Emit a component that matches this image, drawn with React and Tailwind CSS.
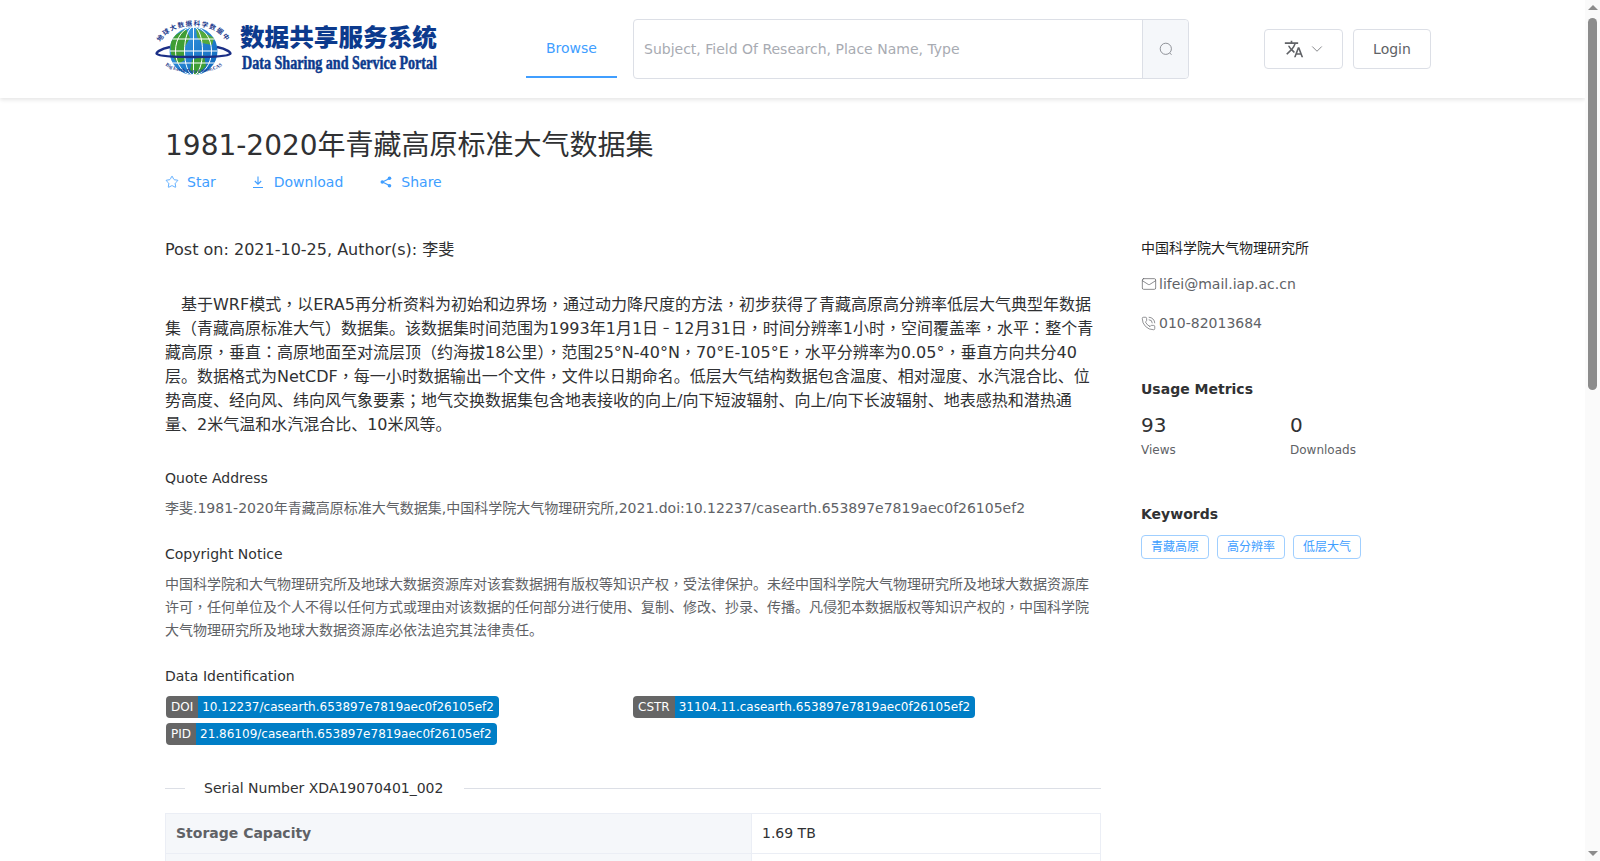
import { Mail, PhoneCall, Star, ChevronDown } from "lucide-react";
import { MdTranslate } from "react-icons/md";

const FONT = "font-['DejaVu_Sans','Noto_Sans_CJK_SC',sans-serif]";

const ABSTRACT =
  "　基于WRF模式，以ERA5再分析资料为初始和边界场，通过动力降尺度的方法，初步获得了青藏高原高分辨率低层大气典型年数据集（青藏高原标准大气）数据集。该数据集时间范围为1993年1月1日－12月31日，时间分辨率1小时，空间覆盖率，水平：整个青藏高原，垂直：高原地面至对流层顶（约海拔18公里），范围25°N-40°N，70°E-105°E，水平分辨率为0.05°，垂直方向共分40层。数据格式为NetCDF，每一小时数据输出一个文件，文件以日期命名。低层大气结构数据包含温度、相对湿度、水汽混合比、位势高度、经向风、纬向风气象要素；地气交换数据集包含地表接收的向上/向下短波辐射、向上/向下长波辐射、地表感热和潜热通量、2米气温和水汽混合比、10米风等。";

const COPYRIGHT =
  "中国科学院和大气物理研究所及地球大数据资源库对该套数据拥有版权等知识产权，受法律保护。未经中国科学院大气物理研究所及地球大数据资源库许可，任何单位及个人不得以任何方式或理由对该数据的任何部分进行使用、复制、修改、抄录、传播。凡侵犯本数据版权等知识产权的，中国科学院大气物理研究所及地球大数据资源库必依法追究其法律责任。";

const KEYWORDS = ["青藏高原", "高分辨率", "低层大气"];

// commas and colons sit centred in the reference, as in the TC cut of the font
function CjkText({ text }) {
  return text.split(/([，：；－])/).map((part, i) => {
    if (i % 2 === 0) return part;
    if (part === "－") {
      return (
        <span key={i} className="inline-block scale-x-[0.45] leading-none">
          {part}
        </span>
      );
    }
    return (
      <span key={i} className="font-['Noto_Sans_CJK_TC',sans-serif] leading-none">
        {part}
      </span>
    );
  });
}

function Logo() {
  return (
    <svg width="286" height="66" viewBox="0 0 286 66" className="shrink-0">
      <defs>
        <linearGradient id="sea" x1="0" y1="0" x2="1" y2="1">
          <stop offset="0" stopColor="#3fa0e8" />
          <stop offset="1" stopColor="#0a63b8" />
        </linearGradient>
        <clipPath id="ball">
          <circle cx="38.5" cy="36" r="24" />
        </clipPath>
        <path id="arcTop" d="M5 29 A34 22 0 0 1 72 29" />
        <path id="arcBottom" d="M9 49 A33 15 0 0 0 69 49" />
      </defs>
      <circle cx="38.5" cy="36" r="24" fill="url(#sea)" />
      <g clipPath="url(#ball)">
        <path d="M15 23 L31 14 L35 23 L29 33 L30 45 L23 49 L16 39 Z" fill="#3f9e35" />
        <path d="M41 13 L59 23 L57 30 L47 28 L42 22 Z" fill="#55a93c" />
        <path d="M37 45 L49 40 L51 51 L41 61 L35 55 Z" fill="#3f9e35" />
        <g fill="none" stroke="#fff" strokeWidth="1">
          <ellipse cx="38.5" cy="36" rx="9" ry="24" />
          <ellipse cx="38.5" cy="36" rx="18" ry="24" />
          <path d="M38.5 12V60M14 36H63M17 24H60M17 48H60" />
        </g>
      </g>
      <path d="M15 32 C5 34 0 38 2 39 C6 43 71 43 75 39 C77 38 72 34 62 32" fill="none" stroke="#1b2f86" strokeWidth="2.4" />
      <text fontSize="6.5" fontWeight="700" fill="#1b3a8c" fontFamily="'Noto Sans CJK SC',sans-serif">
        <textPath href="#arcTop" startOffset="2" letterSpacing="1.2">地球大数据科学数据中心</textPath>
      </text>
      <text fontSize="5" fontWeight="700" fill="#1b3a8c" fontFamily="'Liberation Serif',serif">
        <textPath href="#arcBottom" startOffset="2">Big Earth Data Center,CAS</textPath>
      </text>
      <text x="85" y="31" fontSize="24" fontWeight="900" fill="#0c3a8d" textLength="197" lengthAdjust="spacingAndGlyphs" fontFamily="'Noto Sans CJK SC',sans-serif">数据共享服务系统</text>
      <text x="87" y="54" fontSize="18" fontWeight="700" fill="#0c3a8d" stroke="#0c3a8d" strokeWidth="0.5" textLength="195" lengthAdjust="spacingAndGlyphs" fontFamily="'Liberation Serif',serif">Data Sharing and Service Portal</text>
    </svg>
  );
}

function DownloadIcon() {
  return (
    <svg width="14" height="14" viewBox="0 0 14 14" fill="none" stroke="#409eff" strokeWidth="1.1">
      <path d="M6 1.5V9M2.8 6L6 9.2L9.2 6M1 12.5H11" />
    </svg>
  );
}

function ShareIcon() {
  return (
    <svg width="14" height="14" viewBox="0 0 14 14" fill="#409eff" stroke="#409eff">
      <path d="M10.5 3.5L3.5 7L10.5 10.5" fill="none" strokeWidth="1.2" />
      <circle cx="10.5" cy="3.3" r="1.8" stroke="none" />
      <circle cx="3.3" cy="7" r="1.8" stroke="none" />
      <circle cx="10.5" cy="10.7" r="1.8" stroke="none" />
    </svg>
  );
}

function SearchIcon() {
  return (
    <svg width="14" height="14" viewBox="0 0 14 14" fill="none" stroke="#909399" strokeWidth="1">
      <circle cx="6.8" cy="6.8" r="5.6" />
      <path d="M10.8 11L12.5 12.8" />
    </svg>
  );
}

function Badge({ label, value }) {
  return (
    <div className="flex h-[22px] w-fit items-center overflow-hidden rounded-[4px] text-xs leading-[22px] text-white">
      <span className="bg-[#666666] px-[5px]">{label}</span>
      <span className="bg-[#007ec6] pl-[4px] pr-[5px]">{value}</span>
    </div>
  );
}

function Scrollbar() {
  return (
    <div className="flex h-full w-[15px] shrink-0 flex-col items-center bg-[#fafafa]">
      <div className="mt-[5px] h-0 w-0 border-x-[5px] border-b-[5px] border-x-transparent border-b-[#8c8c8c]" />
      <div className="mt-[8px] h-[372px] w-[9px] rounded-[5px] bg-[#8c8c8c]" />
      <div className="mb-[5px] mt-auto h-0 w-0 border-x-[5px] border-t-[5px] border-x-transparent border-t-[#8c8c8c]" />
    </div>
  );
}

function Header() {
  return (
    <header className="flex h-[98px] shrink-0 items-start bg-white pl-[155px] shadow-[0_2px_4px_rgba(0,0,0,0.1)]">
      <div className="mt-[15px]">
        <Logo />
      </div>
      <div className="ml-[85px] flex h-[78px] w-[91px] items-center justify-center border-b-2 border-[#409eff] pt-[20px] text-sm text-[#409eff]">
        Browse
      </div>
      <div className="ml-[16px] mt-[19px] flex h-[60px] w-[556px] rounded-[4px] border border-[#dcdfe6]">
        <div className="flex flex-1 items-center px-[10px] text-sm text-[#a8abb2]">
          Subject, Field Of Research, Place Name, Type
        </div>
        <div className="flex w-[46px] items-center justify-center rounded-r-[4px] border-l border-[#dcdfe6] bg-[#f5f7fa]">
          <SearchIcon />
        </div>
      </div>
      <div className="ml-[75px] mt-[29px] flex h-[40px] w-[79px] items-center justify-center gap-[4px] rounded-[4px] border border-[#dcdfe6] pl-[2px] text-[#606266]">
        <MdTranslate size={20} />
        <ChevronDown size={18} strokeWidth={1} />
      </div>
      <div className="ml-[10px] mt-[29px] flex h-[40px] w-[78px] items-center justify-center rounded-[4px] border border-[#dcdfe6] text-sm text-[#606266]">
        Login
      </div>
    </header>
  );
}

function Section({ title, children, className }) {
  return (
    <section className={className}>
      <h3 className="text-sm leading-[20px] text-[#303133]">{title}</h3>
      {children}
    </section>
  );
}

function Details() {
  return (
    <main className="w-[936px] shrink-0">
      <p className="text-base leading-[24px] text-[#303133]">Post on: 2021-10-25, Author(s): 李斐</p>
      <p className="mt-[31px] text-base leading-[24px] text-[#303133]">
        <CjkText text={ABSTRACT} />
      </p>
      <Section title="Quote Address" className="mt-[31px]">
        <p className="mt-[9px] text-sm leading-[23px] text-[#606266]">
          李斐.1981-2020年青藏高原标准大气数据集,中国科学院大气物理研究所,2021.doi:10.12237/casearth.653897e7819aec0f26105ef2
        </p>
      </Section>
      <Section title="Copyright Notice" className="mt-[24px]">
        <p className="mt-[9px] text-sm leading-[23px] text-[#606266]">
          <CjkText text={COPYRIGHT} />
        </p>
      </Section>
      <Section title="Data Identification" className="mt-[24px]">
        <div className="mt-[10px] grid grid-cols-[467px_1fr] gap-y-[5px] pl-px">
          <Badge label="DOI" value="10.12237/casearth.653897e7819aec0f26105ef2" />
          <Badge label="CSTR" value="31104.11.casearth.653897e7819aec0f26105ef2" />
          <Badge label="PID" value="21.86109/casearth.653897e7819aec0f26105ef2" />
        </div>
      </Section>
      <div className="mt-[33px] flex items-center text-sm leading-[20px] text-[#303133]">
        <span className="h-px w-[20px] bg-[#dcdfe6]" />
        <span className="pl-[19px] pr-[21px]">Serial Number XDA19070401_002</span>
        <span className="h-px flex-1 bg-[#dcdfe6]" />
      </div>
      <table className="mt-[15px] w-full table-fixed border-collapse text-sm text-[#303133]">
        <tbody>
          <tr className="h-[40px]">
            <th className="w-[586px] border border-[#ebeef5] bg-[#f5f7fa] px-[10px] pb-[2px] text-left font-bold text-[#606266]">Storage Capacity</th>
            <td className="border border-[#ebeef5] px-[10px] pb-[2px]">1.69 TB</td>
          </tr>
          <tr className="h-[40px]">
            <th className="border border-[#ebeef5] bg-[#f5f7fa] px-[10px]" />
            <td className="border border-[#ebeef5] px-[10px]" />
          </tr>
        </tbody>
      </table>
    </main>
  );
}

function Sidebar() {
  return (
    <aside className="ml-[40px] w-[260px] text-sm">
      <p className="leading-[20px] text-[#1f1f1f]">中国科学院大气物理研究所</p>
      <p className="mt-[16px] flex items-center gap-[2px] leading-[20px] text-[#606266]">
        <Mail size={16} strokeWidth={1.1} />
        lifei@mail.iap.ac.cn
      </p>
      <p className="mt-[19px] flex items-center gap-[3px] leading-[20px] text-[#606266]">
        <PhoneCall size={15} strokeWidth={1.1} />
        010-82013684
      </p>
      <h3 className="mt-[46px] font-bold leading-[20px] text-[#303133]">Usage Metrics</h3>
      <div className="mt-[12px] grid grid-cols-[149px_1fr]">
        <div>
          <div className="text-xl leading-[28px] text-[#303133]">93</div>
          <div className="mt-[2px] text-xs leading-[18px] text-[#606266]">Views</div>
        </div>
        <div>
          <div className="text-xl leading-[28px] text-[#303133]">0</div>
          <div className="mt-[2px] text-xs leading-[18px] text-[#606266]">Downloads</div>
        </div>
      </div>
      <h3 className="mt-[45px] font-bold leading-[20px] text-[#303133]">Keywords</h3>
      <div className="mt-[11px] flex gap-[8px]">
        {KEYWORDS.map((word) => (
          <span key={word} className="flex h-[24px] items-center rounded-[4px] border border-[#a0cfff] bg-white px-[9px] text-xs text-[#409eff]">
            {word}
          </span>
        ))}
      </div>
    </aside>
  );
}

export default function App() {
  return (
    <div className={`${FONT} flex h-[861px] overflow-hidden bg-white`}>
      <div className="flex min-w-0 flex-1 flex-col overflow-hidden">
        <Header />
        <div className="pl-[165px]">
          <h1 className="mt-[28px] text-[28px] leading-[40px] text-[#303133]">1981-2020年青藏高原标准大气数据集</h1>
          <div className="mt-[6px] flex items-center text-sm leading-[20px] text-[#409eff]">
            <span className="flex items-center gap-[8px]">
              <Star size={14} strokeWidth={1.4} />
              Star
            </span>
            <span className="ml-[36px] flex items-center gap-[8px]">
              <DownloadIcon />
              Download
            </span>
            <span className="ml-[36px] flex items-center gap-[8px]">
              <ShareIcon />
              Share
            </span>
          </div>
          <div className="mt-[46px] flex">
            <Details />
            <Sidebar />
          </div>
        </div>
      </div>
      <Scrollbar />
    </div>
  );
}
